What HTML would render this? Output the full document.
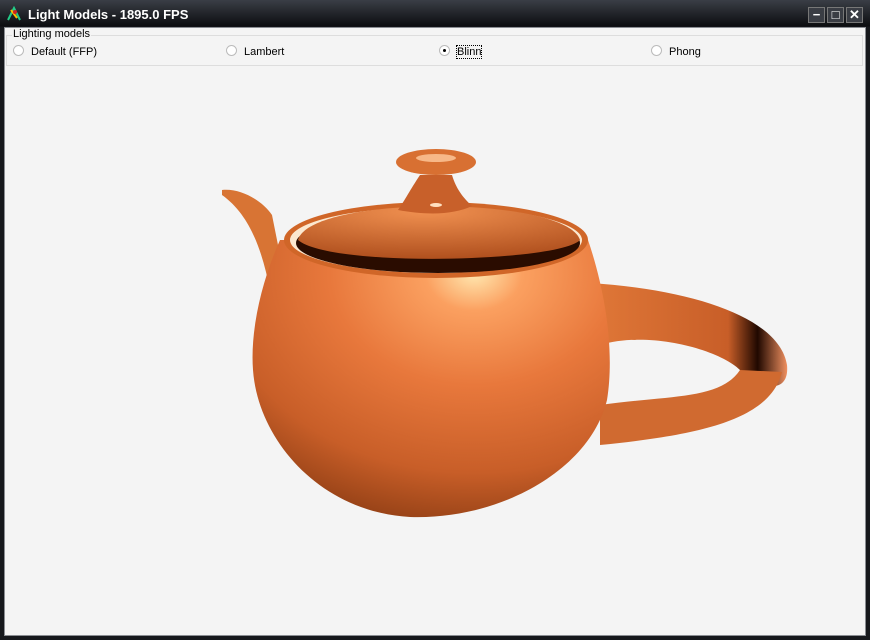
<!DOCTYPE html>
<html><head><style>
body{margin:0;width:870px;height:640px;overflow:hidden;background:#1a1d22;font-family:"Liberation Sans",sans-serif;}
#win{position:absolute;left:0;top:0;width:870px;height:640px;background:linear-gradient(#3a3e46,#0c0d10 26px,#16181c 27px);}
#title{position:absolute;left:28px;top:7px;color:#fff;font-weight:bold;font-size:13px;}
#client{position:absolute;left:4px;top:27px;width:862px;height:609px;background:#f4f4f4;border:1px solid #8a8d92;box-sizing:border-box;}
.btn{position:absolute;top:7px;width:17px;height:16px;background:#3a3d44;border:1px solid #777;box-sizing:border-box;color:#fff;font-size:13px;font-weight:bold;line-height:14px;text-align:center;}
.grp{position:absolute;left:1px;top:7px;width:857px;height:31px;border:1px solid #ddd;box-sizing:border-box;}
.lg{position:absolute;left:7px;top:0px;font-size:11px;color:#000;background:#f4f4f4;padding:0 1px;}
.rb{position:absolute;top:17px;font-size:11px;color:#000;}
.rb i{display:inline-block;width:9px;height:9px;border:1px solid #bbb;border-radius:50%;background:#fff;vertical-align:-1px;margin-right:7px;position:relative;}
.rb i.on:after{content:"";position:absolute;left:3px;top:3px;width:3px;height:3px;background:#000;border-radius:50%;}
</style></head><body>
<div id="win">
<svg style="position:absolute;left:6px;top:6px" width="16" height="16"><path d="M2 14 L8 2 L14 14" stroke="#2c8" stroke-width="2" fill="none"/><path d="M5 4 L11 12" stroke="#fb0" stroke-width="2"/><circle cx="9" cy="6" r="2" fill="#c22"/></svg>
<div id="title">Light Models - 1895.0 FPS</div>
<div class="btn" style="left:808px">&#8722;</div>
<div class="btn" style="left:827px">&#9633;</div>
<div class="btn" style="left:846px">✕</div>
<div id="client">
<div class="grp"></div>
<div class="lg">Lighting models</div>
<div class="rb" style="left:8px"><i></i>Default (FFP)</div>
<div class="rb" style="left:221px"><i></i>Lambert</div>
<div class="rb" style="left:434px"><i class="on"></i><span style="outline:1px dotted #000">Blinn</span></div>
<div class="rb" style="left:646px"><i></i>Phong</div>
</div>
<svg style="position:absolute;left:0;top:0" width="870" height="640">
<defs>
<radialGradient id="b" cx="0.62" cy="0.12" r="0.9"><stop offset="0" stop-color="#ffe8b0"/><stop offset="0.15" stop-color="#fba060"/><stop offset="0.45" stop-color="#e8783c"/><stop offset="0.8" stop-color="#c85e28"/><stop offset="1" stop-color="#9a4418"/></radialGradient>
<linearGradient id="h" x1="0" x2="1"><stop offset="0" stop-color="#e07838"/><stop offset="0.7" stop-color="#c85e28"/><stop offset="0.85" stop-color="#200800"/><stop offset="1" stop-color="#f09060"/></linearGradient>
<radialGradient id="l" cx="0.45" cy="0.1" r="0.9"><stop offset="0" stop-color="#f09050"/><stop offset="1" stop-color="#b0501e"/></radialGradient>
</defs>
<path d="M590 283 C700 290 780 320 787 365 C790 395 760 390 740 370 C720 350 650 330 600 345 Z" fill="url(#h)"/>
<path d="M600 405 C670 395 720 400 740 370 L782 372 C770 420 700 435 600 445 Z" fill="#d06a30"/>
<path d="M222 190 C240 188 262 200 272 215 L285 280 L270 290 C262 250 250 215 222 195 Z" fill="#d87434"/>
<path d="M280 240 C262 280 250 330 253 370 C258 440 320 512 410 517 C500 520 590 470 607 400 C615 350 605 290 588 240 Z" fill="url(#b)"/>
<ellipse cx="436" cy="240" rx="152" ry="38" fill="#d06628"/>
<ellipse cx="436" cy="240" rx="146" ry="33" fill="#fbe8d0"/>
<ellipse cx="438" cy="243" rx="142" ry="30" fill="#2a0c00"/>
<path d="M298 240 C310 195 565 195 580 240 C560 262 330 268 298 240 Z" fill="url(#l)"/>
<path d="M420 175 C410 190 405 200 398 210 C430 216 455 214 472 206 C460 195 455 185 452 175 Z" fill="#c8602a"/>
<ellipse cx="436" cy="162" rx="40" ry="13" fill="#d87032"/>
<ellipse cx="436" cy="158" rx="20" ry="4" fill="#f7b888"/>
<ellipse cx="436" cy="205" rx="6" ry="2" fill="#ffe0c0"/>
</svg>
</div>
</body></html>
